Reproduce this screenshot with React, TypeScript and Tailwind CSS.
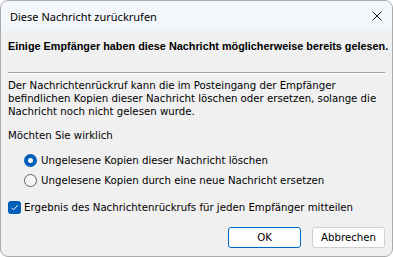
import React from 'react'

const body = { fontFamily: '"DejaVu Sans", Verdana, sans-serif' }

const Radio = ({ checked, label }: { checked?: boolean; label: string }) => (
  <div className="flex items-center h-[20px] pl-[16px] gap-[4px]">
    {checked ? (
      <span className="w-[13px] h-[13px] rounded-full bg-[#005fb8] flex items-center justify-center">
        <span className="w-[5px] h-[5px] rounded-full bg-white" />
      </span>
    ) : (
      <span className="w-[13px] h-[13px] rounded-full border border-[#5f5f5f] bg-[#f7f7f7]" />
    )}
    <span>{label}</span>
  </div>
)

export default function App() {
  return (
    <div className="w-[393px] h-[257px] bg-white">
      <div
        className="w-[393px] h-[257px] bg-[#f0f0f0] border border-[#aaaaaa] rounded-lg overflow-hidden flex flex-col text-[10.2px] leading-[13px] text-black"
        style={body}
      >
        {/* Title bar */}
        <div className="h-[30px] bg-[#f3f6fa] flex items-center justify-between pl-[9px] pr-[10px] shrink-0">
          <span className="text-[11px]" style={{ fontFamily: '"Noto Sans", sans-serif' }}>
            Diese Nachricht zurückrufen
          </span>
          <svg width="10" height="10" viewBox="0 0 10 10">
            <path d="M0.5 0.5 L9.5 9.5 M9.5 0.5 L0.5 9.5" stroke="#1a1a1a" strokeWidth="1" />
          </svg>
        </div>

        <div className="flex flex-col px-[7px]">
          <p
            className="mt-[9px] font-bold text-[10.85px] whitespace-nowrap"
            style={{ fontFamily: '"Liberation Sans", Arial, sans-serif' }}
          >
            Einige Empfänger haben diese Nachricht möglicherweise bereits gelesen.
          </p>

          <div className="mt-[19px] border-t border-[#a0a0a0] border-b border-b-white" />

          <p className="mt-[5px] whitespace-nowrap">
            Der Nachrichtenrückruf kann die im Posteingang der Empfänger
            <br />
            befindlichen Kopien dieser Nachricht löschen oder ersetzen, solange die
            <br />
            Nachricht noch nicht gelesen wurde.
          </p>

          <p className="mt-[11px]">Möchten Sie wirklich</p>

          <div className="mt-[8px] flex flex-col">
            <Radio checked label="Ungelesene Kopien dieser Nachricht löschen" />
            <Radio label="Ungelesene Kopien durch eine neue Nachricht ersetzen" />
          </div>

          <div className="mt-[7px] flex items-center h-[20px] gap-[3px]">
            <span className="w-[13px] h-[13px] rounded-[3px] bg-[#005fb8] flex items-center justify-center">
              <svg width="9" height="9" viewBox="0 0 9 9">
                <path d="M1.5 4.8 L3.5 6.8 L7.7 2.2" fill="none" stroke="white" strokeWidth="1" />
              </svg>
            </span>
            <span className="whitespace-nowrap">Ergebnis des Nachrichtenrückrufs für jeden Empfänger mitteilen</span>
          </div>

          <div className="mt-[10px] flex justify-end gap-[11px]">
            <button className="w-[73px] h-[21px] rounded-[3px] border border-[#0067c0] bg-[#fdfdfd]">
              OK
            </button>
            <button className="w-[73px] h-[21px] rounded-[3px] border border-[#d0d0d0] bg-[#fdfdfd]">
              Abbrechen
            </button>
          </div>
        </div>
      </div>
    </div>
  )
}
